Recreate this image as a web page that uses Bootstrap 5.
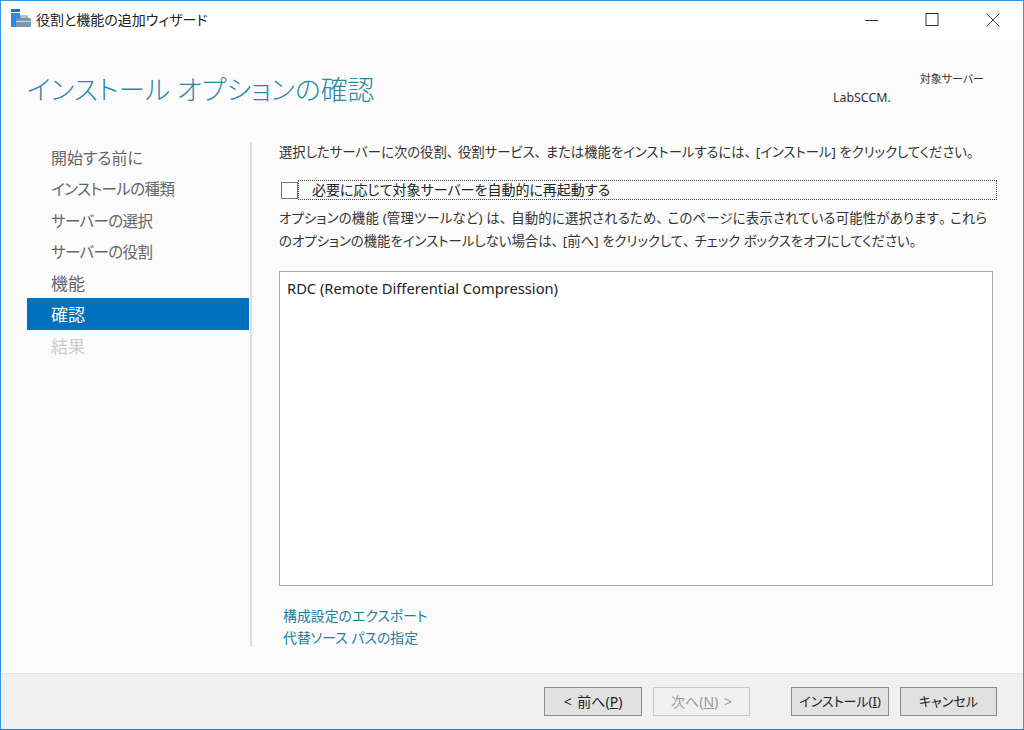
<!DOCTYPE html>
<html lang="ja">
<head>
<meta charset="utf-8">
<title>役割と機能の追加ウィザード</title>
<link href="https://cdn.jsdelivr.net/npm/bootstrap@5.3.0/dist/css/bootstrap.min.css" rel="stylesheet">
<style>
html,body{height:730px;overflow:hidden;margin:0}
body{background:#fff;color:#333;font-family:"Noto Sans","Noto Sans CJK JP",sans-serif;font-size:14px;font-feature-settings:"palt";line-height:1.3}
.win{height:730px;width:1024px;border:1px solid #3b95dc;border-bottom-color:#2f78b4}
.tbar{height:38px;background:#fff;flex:none}
.ticon{margin-left:10px;margin-bottom:2px}
.ttl{font-size:14px;color:#222;margin-left:5px}
.wbtn{width:61px;height:38px;display:flex;align-items:center;justify-content:center}
.wmain{flex:1;background:#fbfbfb;min-height:0}
.whead{height:103px;padding-left:26px;flex:none}
.h-title{font-size:26.8px;font-weight:300;color:#2a87a8;margin:31px 0 0;line-height:40px}
.srv{width:170px;margin-right:39px;color:#333}
.srv-a{text-align:right;margin-top:33px;font-size:11px}
.srv-b{margin-top:4px;padding-left:19px;font-size:12.4px}
.wbody{flex:1;min-height:0;padding:0 0 26px 26px}
.wnav{width:225px;flex:none;border-right:2px solid #ddd}
.wnav .navi{height:31.3px;line-height:33px;padding-left:24px;margin-right:1px;color:#666;font-size:15.5px}
.wnav .navi.kjw{font-size:15.9px}
.wnav .navi.kj2{font-size:17px}
.wnav .navi.tgt{letter-spacing:-.6px}
.wnav .navi.on{background:#0071bd;color:#fff}
.wnav .navi.off{color:#ccc}
.wcont{width:714px;margin-left:27px;flex:none}
.line1{height:19px;line-height:21px;margin-bottom:19px;white-space:nowrap;font-size:13.35px}
.pn{letter-spacing:4.5px}
.chkrow{height:20px;margin-bottom:7px;margin-right:-4px}
.chkbox{width:17px;height:17px;border:1px solid #777;background:#fff;margin-left:2px;flex:none}
.chktxt{flex:1;border:1px dotted #444;height:20px;line-height:18px;padding-left:13px;font-size:14px;color:#222}
.desc{line-height:23px;margin-bottom:18px;height:46px;font-size:13.4px;white-space:nowrap}
.desc-a{letter-spacing:.18px}
.lbox{height:315px;border:1px solid #aaa;background:#fff;padding:7px;font-size:14.7px;color:#222;margin-bottom:19px}
.wlinks a{display:block;color:#1f7d9e;text-decoration:none;height:22px;line-height:22px;padding-left:4px;font-size:13.9px}
.wfoot{height:56px;flex:none;background:#f0f0f0;border-top:1px solid #e4e4e4;padding:13px 26px 0 0}
.wbtn2{width:98px;height:29px;background:#e1e1e1;border:1px solid #8a8a8a;border-radius:0;font-size:14px;color:#222;padding:0;line-height:27px;font-family:inherit;font-feature-settings:"palt";white-space:nowrap;word-spacing:2px}
.wbtn2.nar{width:97px}
.wbtn2.kana{font-size:13px}
.wbtn2.dis{background:#f0f0f0;border-color:#c8c8c8;color:#9a9a9a;opacity:1}
.g1{margin-right:11px}
.g2{margin-right:41px}
</style>
</head>
<body>
<div class="win d-flex flex-column">
  <div class="tbar d-flex align-items-center">
    <svg class="ticon" width="20" height="20" viewBox="0 0 20 20" aria-hidden="true"><rect x="0" y="0" width="9" height="3" fill="#1e6fc0"/><rect x="0" y="4" width="9" height="14" fill="#2b8ae0"/><rect x="5" y="9" width="15" height="9" rx="1" fill="#7b98ad"/><rect x="5" y="12" width="15" height="1" fill="#d5dee5"/><rect x="9" y="7" width="7" height="2" fill="none" stroke="#6b8499" stroke-width="1"/></svg>
    <div class="ttl">役割と機能の追加ウィザード</div>
    <div class="ms-auto d-flex">
      <div class="wbtn"><svg width="14" height="14" viewBox="0 0 14 14"><path d="M1 7.500h13" stroke="#333" fill="none"/></svg></div>
      <div class="wbtn"><svg width="14" height="14" viewBox="0 0 14 14"><rect x="1" y=".5" width="12" height="12" stroke="#333" fill="none"/></svg></div>
      <div class="wbtn"><svg width="14" height="14" viewBox="0 0 14 14"><path d="M.5.5l13 13M13.500 .5l-13 13" stroke="#444" fill="none"/></svg></div>
    </div>
  </div>
  <div class="wmain d-flex flex-column">
    <div class="whead d-flex justify-content-between">
      <h1 class="h-title">インストール オプションの確認</h1>
      <div class="srv">
        <div class="srv-a">対象サーバー</div>
        <div class="srv-b">LabSCCM.</div>
      </div>
    </div>
    <div class="wbody d-flex">
      <div class="wnav">
        <div class="navi kjw">開始する前に</div>
        <div class="navi tgt">インストールの種類</div>
        <div class="navi tgt">サーバーの選択</div>
        <div class="navi tgt">サーバーの役割</div>
        <div class="navi kj2">機能</div>
        <div class="navi kj2 on">確認</div>
        <div class="navi kj2 off">結果</div>
      </div>
      <div class="wcont">
        <div class="line1">選択したサーバーに次の役割<span class="pn">、</span>役割サービス<span class="pn">、</span>または機能をインストールするには<span class="pn">、</span>[インストール] をクリックしてください。</div>
        <div class="chkrow d-flex align-items-center">
          <div class="chkbox"></div>
          <div class="chktxt">必要に応じて対象サーバーを自動的に再起動する</div>
        </div>
        <div class="desc"><span class="desc-a">オプションの機能 (管理ツールなど) は<span class="pn">、</span>自動的に選択されるため<span class="pn">、</span>このページに表示されている可能性があります<span class="pn">。</span>これら</span><br>のオプションの機能をインストールしない場合は<span class="pn">、</span>[前へ] をクリックして<span class="pn">、</span>チェック ボックスをオフにしてください。</div>
        <div class="lbox">RDC (Remote Differential Compression)</div>
        <div class="wlinks">
          <a href="#">構成設定のエクスポート</a>
          <a href="#">代替ソース パスの指定</a>
        </div>
      </div>
    </div>
  </div>
  <div class="wfoot d-flex justify-content-end">
    <button class="btn wbtn2 g1" type="button">&lt; 前へ(<u>P</u>)</button>
    <button class="btn wbtn2 nar dis g2" type="button">次へ(<u>N</u>) &gt;</button>
    <button class="btn wbtn2 kana g1" type="button">インストール(<u>I</u>)</button>
    <button class="btn wbtn2 kana nar" type="button">キャンセル</button>
  </div>
</div>
<script src="https://cdn.jsdelivr.net/npm/bootstrap@5.3.0/dist/js/bootstrap.bundle.min.js"></script>
</body>
</html>
